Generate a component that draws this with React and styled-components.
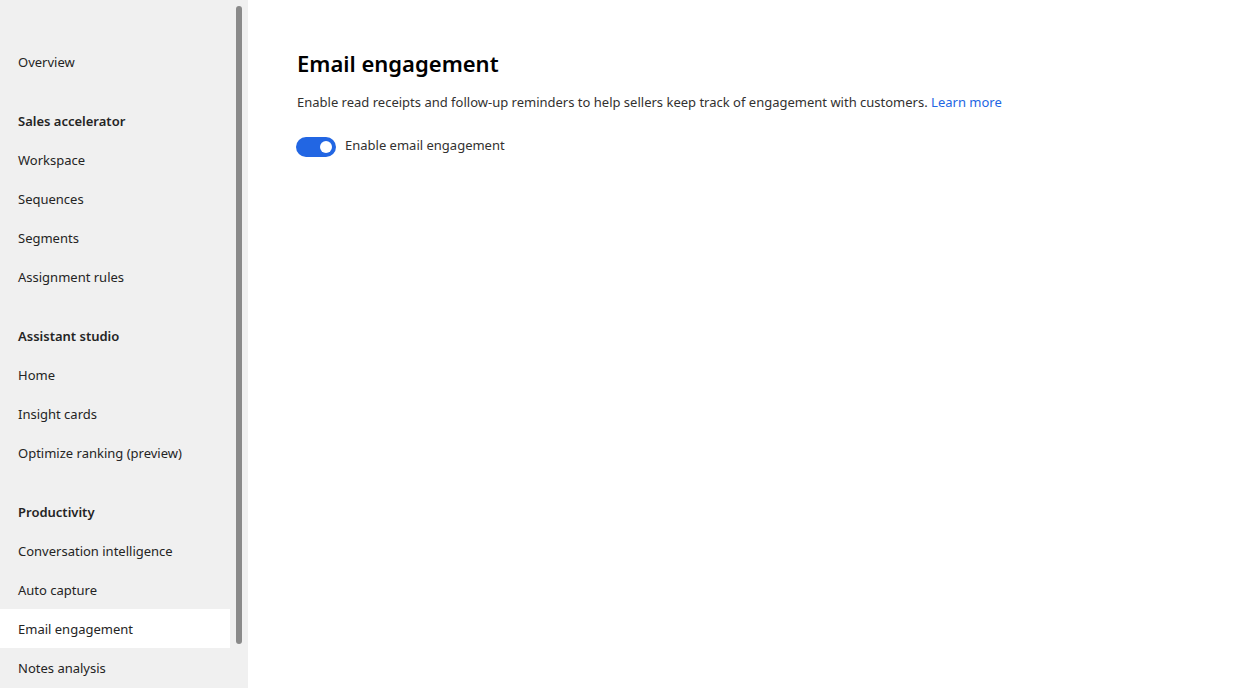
import React from "react";
import styled, { createGlobalStyle } from "styled-components";

const GlobalStyle = createGlobalStyle`
  html, body {
    margin: 0;
    padding: 0;
    height: 100%;
  }
  body {
    font-family: "Segoe UI", "Noto Sans", "Open Sans", sans-serif;
    color: #242424;
    background: #ffffff;
  }
  #root {
    height: 100%;
  }
`;

const Layout = styled.div`
  display: flex;
  height: 100vh;
  overflow: hidden;
`;

const Sidebar = styled.nav`
  position: relative;
  width: 248px;
  flex-shrink: 0;
  background: #f0f0f0;
  padding-top: 42px;
  box-sizing: border-box;
  overflow: hidden;
`;

const NavList = styled.ul`
  list-style: none;
  margin: 0;
  padding: 0;
  width: 230px;
`;

const Group = styled.li`
  margin-bottom: 20px;
`;

const NavItem = styled.div`
  height: 39px;
  display: flex;
  align-items: center;
  padding-left: 18px;
  font-size: 13px;
  font-weight: ${(p) => (p.$header ? 600 : 400)};
  background: ${(p) => (p.$active ? "#ffffff" : "transparent")};
  color: #242424;
  cursor: ${(p) => (p.$header ? "default" : "pointer")};
`;

const ScrollThumb = styled.div`
  position: absolute;
  top: 6px;
  left: 236px;
  width: 6px;
  height: 638px;
  border-radius: 3px;
  background: #8a8a8a;
`;

const Main = styled.main`
  flex: 1;
  padding: 47px 49px;
`;

const Title = styled.h1`
  margin: 0 0 13px;
  font-size: 22px;
  font-weight: 600;
  line-height: 32px;
  color: #000000;
`;

const Description = styled.p`
  margin: 0 0 25px;
  font-size: 13px;
  line-height: 20px;
  color: #323130;
`;

const Link = styled.a`
  color: #2266e3;
  text-decoration: none;
`;

const ToggleRow = styled.label`
  display: flex;
  align-items: center;
  gap: 9px;
  margin-left: -1px;
  font-size: 13px;
  color: #323130;
`;

const ToggleText = styled.span`
  line-height: 20px;
  margin-top: -4px;
`;

const Switch = styled.span`
  position: relative;
  width: 40px;
  height: 20px;
  border-radius: 10px;
  background: ${(p) => (p.$on ? "#2266e3" : "#ffffff")};
  flex-shrink: 0;

  &::after {
    content: "";
    position: absolute;
    top: 4px;
    left: ${(p) => (p.$on ? "24px" : "4px")};
    width: 12px;
    height: 12px;
    border-radius: 50%;
    background: ${(p) => (p.$on ? "#ffffff" : "#605e5c")};
  }
`;

const groups = [
  { items: ["Overview"] },
  {
    title: "Sales accelerator",
    items: ["Workspace", "Sequences", "Segments", "Assignment rules"],
  },
  {
    title: "Assistant studio",
    items: ["Home", "Insight cards", "Optimize ranking (preview)"],
  },
  {
    title: "Productivity",
    items: [
      "Conversation intelligence",
      "Auto capture",
      "Email engagement",
      "Notes analysis",
    ],
  },
];

export default function App() {
  const active = "Email engagement";
  return (
    <>
      <GlobalStyle />
      <Layout>
        <Sidebar>
          <NavList>
            {groups.map((g, i) => (
              <Group key={i}>
                {g.title && <NavItem $header>{g.title}</NavItem>}
                {g.items.map((item) => (
                  <NavItem key={item} $active={item === active}>
                    {item}
                  </NavItem>
                ))}
              </Group>
            ))}
          </NavList>
          <ScrollThumb />
        </Sidebar>
        <Main>
          <Title>Email engagement</Title>
          <Description>
            Enable read receipts and follow-up reminders to help sellers keep
            track of engagement with customers. <Link href="#">Learn more</Link>
          </Description>
          <ToggleRow>
            <Switch $on />
            <ToggleText>Enable email engagement</ToggleText>
          </ToggleRow>
        </Main>
      </Layout>
    </>
  );
}
